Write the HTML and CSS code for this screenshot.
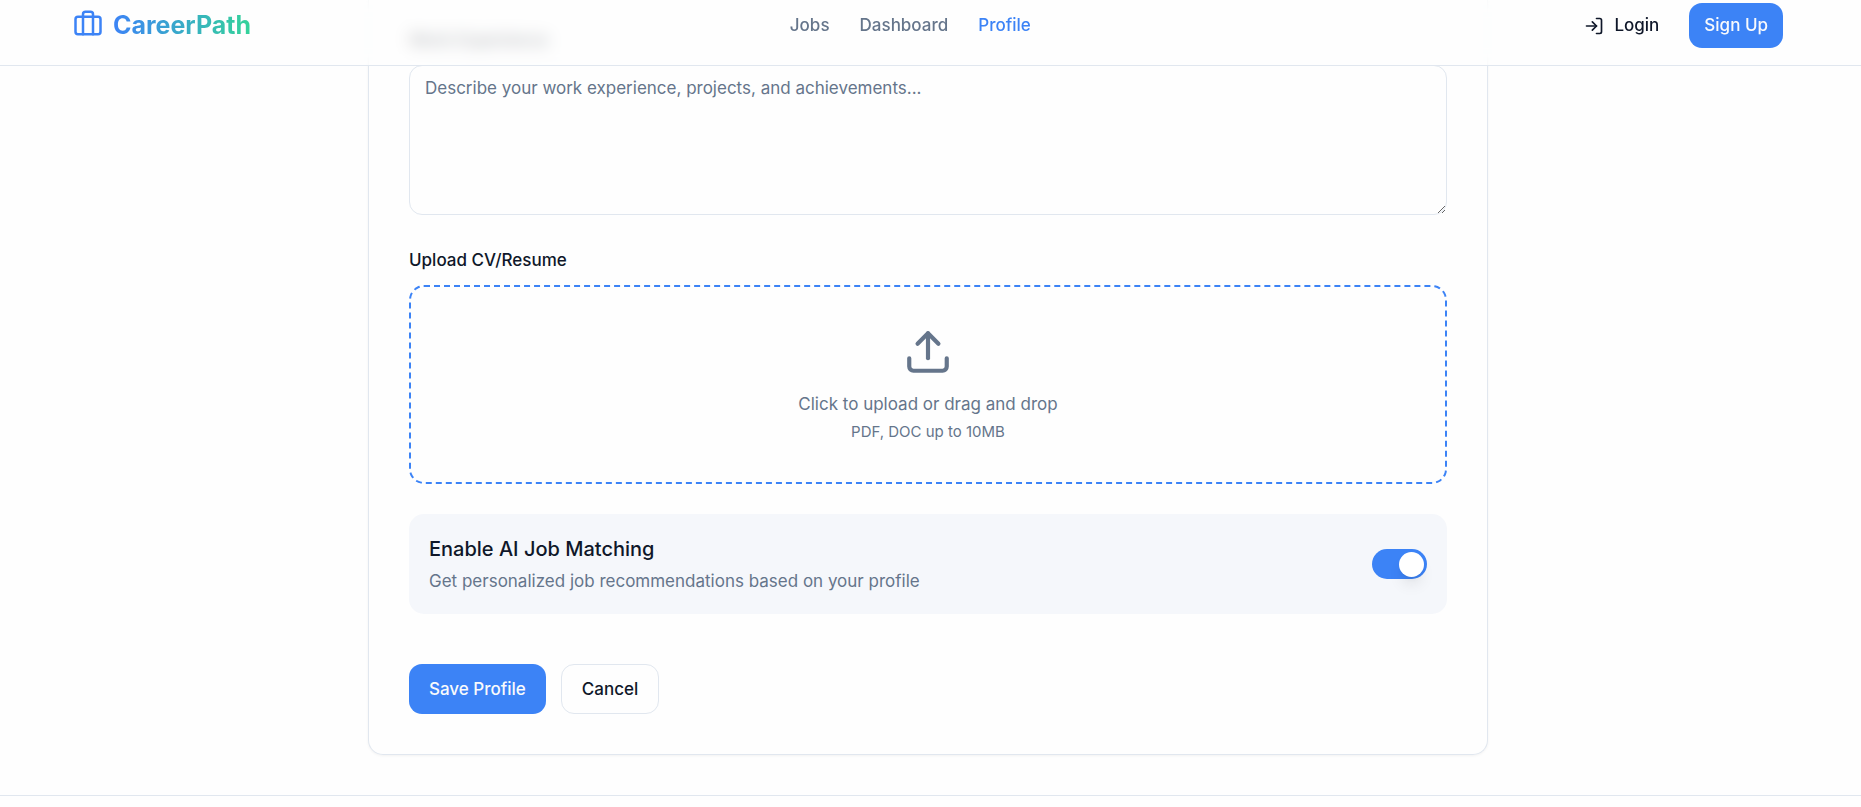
FILE: index.html
```html
<!DOCTYPE html>
<html lang="en">
<head>
  <meta charset="utf-8">
  <meta name="viewport" content="width=device-width, initial-scale=1">
  <title>CareerPath – Profile</title>
  <link rel="stylesheet" href="styles.css">
</head>
<body>
  <header class="site-header">
    <a class="brand" href="#">
      <svg class="brand-icon" viewBox="0 0 24 24" aria-hidden="true"><path d="M16 21V5a2 2 0 0 0-2-2h-4a2 2 0 0 0-2 2v16"/><rect x="2" y="7" width="20" height="14" rx="2"/></svg>
      <span class="brand-name">CareerPath</span>
    </a>
    <nav class="site-nav">
      <a class="nav-link" href="#">Jobs</a>
      <a class="nav-link" href="#">Dashboard</a>
      <a class="nav-link nav-link-active" href="#" aria-current="page">Profile</a>
    </nav>
    <div class="header-actions">
      <button class="btn btn-small btn-ghost" type="button">
        <svg class="btn-icon" viewBox="0 0 24 24" aria-hidden="true"><path d="M15 3h4a2 2 0 0 1 2 2v14a2 2 0 0 1-2 2h-4"/><path d="m10 17 5-5-5-5"/><path d="M15 12H3"/></svg>
        Login
      </button>
      <button class="btn btn-small btn-primary" type="button">Sign Up</button>
    </div>
  </header>

  <main class="page">
    <form class="profile-card">
      <div class="field">
        <label class="label" for="experience">Work Experience</label>
        <textarea class="textarea" id="experience" placeholder="Describe your work experience, projects, and achievements..."></textarea>
      </div>

      <div class="field">
        <label class="label" for="resume">Upload CV/Resume</label>
        <label class="dropzone" for="resume">
          <svg class="upload-icon" viewBox="0 0 24 24" aria-hidden="true"><path d="M12 3v12"/><path d="m17 8-5-5-5 5"/><path d="M21 15v4a2 2 0 0 1-2 2H5a2 2 0 0 1-2-2v-4"/></svg>
          <span class="dropzone-title">Click to upload or drag and drop</span>
          <span class="dropzone-hint">PDF, DOC up to 10MB</span>
        </label>
        <input class="visually-hidden" id="resume" type="file" accept=".pdf,.doc">
      </div>

      <div class="setting">
        <label class="setting-text" for="matching">
          <span class="setting-title">Enable AI Job Matching</span>
          <span class="setting-desc">Get personalized job recommendations based on your profile</span>
        </label>
        <input class="switch" id="matching" type="checkbox" role="switch" checked>
      </div>

      <div class="form-actions">
        <button class="btn btn-primary" type="submit">Save Profile</button>
        <button class="btn btn-outline" type="button">Cancel</button>
      </div>
    </form>
  </main>

  <footer class="site-footer"></footer>
</body>
</html>
```
FILE: styles.css
```css
:root {
  --blue: #3c83f6;
  --green: #34d399;
  --ink: #0f1729;
  --muted: #65758b;
  --line: #e1e7ef;
  --panel: #f5f7fb;
  --surface: #fefefe;
}

* {
  box-sizing: border-box;
}

body {
  margin: 0;
  background: var(--surface);
  color: var(--ink);
  font-family: Inter, "Liberation Sans", sans-serif;
  font-size: 17px;
  line-height: 25px;
}

svg {
  fill: none;
  stroke: currentColor;
  stroke-width: 2;
  stroke-linecap: round;
  stroke-linejoin: round;
}

.site-header {
  position: fixed;
  top: 0;
  left: 0;
  right: 0;
  z-index: 10;
  display: flex;
  align-items: center;
  justify-content: space-between;
  padding: 3px 78px 17px 73px;
  border-bottom: 1px solid var(--line);
  background: rgba(254, 254, 254, 0.7);
  backdrop-filter: blur(8px);
}

.brand {
  display: flex;
  align-items: flex-start;
  gap: 10px;
  color: var(--blue);
  font-size: 25px;
  line-height: 35px;
  font-weight: 700;
  text-decoration: none;
}

.brand-icon {
  width: 30px;
  height: 30px;
}

.brand-name {
  background: linear-gradient(90deg, var(--blue), var(--green));
  background-clip: text;
  color: transparent;
}

.site-nav {
  display: flex;
  gap: 30px;
}

.nav-link {
  color: var(--muted);
  font-weight: 500;
  text-decoration: none;
}

.nav-link-active {
  color: var(--blue);
}

.header-actions {
  display: flex;
  gap: 15px;
}

.btn {
  display: flex;
  align-items: center;
  justify-content: center;
  gap: 10px;
  height: 50px;
  padding: 0 20px;
  border: 0;
  border-radius: 13px;
  font: inherit;
  font-weight: 500;
  color: var(--ink);
  cursor: pointer;
}

.btn-small {
  height: 45px;
  padding: 0 15px;
}

.btn-primary {
  background: var(--blue);
  color: #f8fafc;
}

.btn-ghost {
  background: transparent;
}

.btn-outline {
  border: 1px solid var(--line);
  background: var(--surface);
}

.btn-icon {
  width: 20px;
  height: 20px;
}

.page {
  padding: 0 5px 40px 0;
}

.profile-card {
  display: flex;
  flex-direction: column;
  gap: 30px;
  max-width: 1120px;
  margin: 0 auto;
  padding: 25px 40px 40px;
  border: 1px solid var(--line);
  border-top: 0;
  border-radius: 0 0 15px 15px;
  background: var(--surface);
  box-shadow: 0 1px 3px rgba(0, 0, 0, 0.05);
}

.field {
  display: flex;
  flex-direction: column;
  gap: 12px;
}

.label {
  padding-top: 3px;
  font-weight: 500;
}

.textarea {
  display: block;
  width: 100%;
  height: 150px;
  padding: 10px 15px;
  border: 1px solid var(--line);
  border-radius: 13px;
  background: var(--surface);
  color: var(--ink);
  font: inherit;
  resize: vertical;
}

.textarea::placeholder {
  color: var(--muted);
}

.dropzone {
  display: flex;
  flex-direction: column;
  align-items: center;
  padding: 40px;
  border: 2px dashed var(--blue);
  border-radius: 15px;
  color: var(--muted);
  cursor: pointer;
}

.upload-icon {
  width: 50px;
  height: 50px;
  margin-bottom: 15px;
}

.dropzone-hint {
  margin-top: 5px;
  font-size: 15px;
  line-height: 20px;
}

.visually-hidden {
  position: absolute;
  width: 1px;
  height: 1px;
  overflow: hidden;
  clip-path: inset(50%);
}

.setting {
  display: flex;
  align-items: center;
  justify-content: space-between;
  padding: 20px;
  border-radius: 15px;
  background: var(--panel);
}

.setting-text {
  display: flex;
  flex-direction: column;
  gap: 5px;
}

.setting-title {
  font-size: 20px;
  line-height: 30px;
  font-weight: 500;
}

.setting-desc {
  color: var(--muted);
}

.switch {
  appearance: none;
  display: flex;
  align-items: center;
  flex-shrink: 0;
  width: 55px;
  height: 30px;
  margin: 0;
  padding: 0 3px;
  border-radius: 15px;
  background: var(--line);
  cursor: pointer;
}

.switch::before {
  content: "";
  width: 25px;
  height: 25px;
  border-radius: 50%;
  background: #fff;
  box-shadow: 0 10px 15px -3px rgba(0, 0, 0, 0.1), 0 4px 6px -4px rgba(0, 0, 0, 0.1);
}

.switch:checked {
  justify-content: flex-end;
  background: var(--blue);
}

.form-actions {
  display: flex;
  gap: 15px;
  padding-top: 20px;
}

.site-footer {
  height: 12px;
  border-top: 1px solid var(--line);
}
```
